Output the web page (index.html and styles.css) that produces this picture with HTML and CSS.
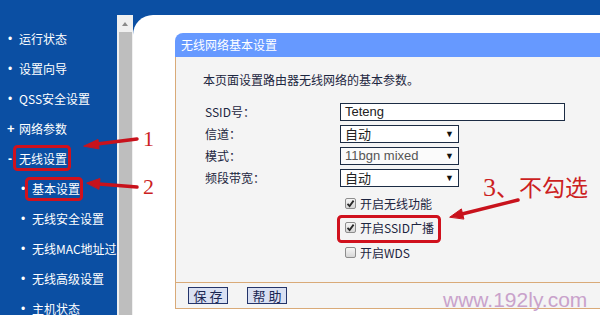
FILE: index.html
```html
<!DOCTYPE html>
<html lang="zh">
<head>
<meta charset="utf-8">
<title>无线网络基本设置</title>
<link rel="stylesheet" href="styles.css">
</head>
<body>
<div class="layout">
  <nav class="sidebar">
    <div class="nav-item"><span class="bullet">•</span>运行状态</div>
    <div class="nav-item"><span class="bullet">•</span>设置向导</div>
    <div class="nav-item"><span class="bullet">•</span>QSS安全设置</div>
    <div class="nav-item"><span class="bullet plus">+</span>网络参数</div>
    <div class="nav-item"><span class="bullet minus">-</span>无线设置</div>
    <div class="nav-item sub"><span class="bullet">•</span>基本设置</div>
    <div class="nav-item sub"><span class="bullet">•</span>无线安全设置</div>
    <div class="nav-item sub"><span class="bullet">•</span>无线MAC地址过滤</div>
    <div class="nav-item sub"><span class="bullet">•</span>无线高级设置</div>
    <div class="nav-item sub"><span class="bullet">•</span>主机状态</div>
  </nav>
  <div class="scrollbar">
    <div class="sb-up"><span class="sb-arrow"></span></div>
    <div class="sb-thumb"></div>
  </div>
  <main class="main">
    <section class="panel">
      <div class="panel-head">无线网络基本设置</div>
      <div class="panel-body">
        <p class="intro">本页面设置路由器无线网络的基本参数。</p>
        <div class="form">
          <div class="row"><span class="label">SSID号：</span><span class="field wide">Teteng</span></div>
          <div class="row"><span class="label">信道：</span><span class="field select"><span class="cjk">自动</span><span class="caret">▼</span></span></div>
          <div class="row"><span class="label">模式：</span><span class="field select muted">11bgn mixed<span class="caret">▼</span></span></div>
          <div class="row"><span class="label">频段带宽：</span><span class="field select"><span class="cjk">自动</span><span class="caret">▼</span></span></div>
        </div>
        <div class="checks">
          <div class="check-row"><span class="cb checked"><svg viewBox="0 0 9 9" width="9" height="9"><path d="M1.5 4.8 L3.6 7 L7.6 1.6" fill="none" stroke="#2a2a2a" stroke-width="1.8"/></svg></span>开启无线功能</div>
          <div class="check-row"><span class="cb checked"><svg viewBox="0 0 9 9" width="9" height="9"><path d="M1.5 4.8 L3.6 7 L7.6 1.6" fill="none" stroke="#2a2a2a" stroke-width="1.8"/></svg></span>开启SSID广播</div>
          <div class="check-row"><span class="cb"></span>开启WDS</div>
        </div>
        <div class="footer">
          <span class="btn">保存</span>
          <span class="btn">帮助</span>
        </div>
      </div>
    </section>
  </main>
</div>

<div class="watermark">www.192ly.com</div>
<div class="note n1">1</div>
<div class="note n2">2</div>
<div class="note n3"><span class="num">3</span>、不勾选</div>
<svg class="marks" width="600" height="315" viewBox="0 0 600 315">
  <g fill="none" stroke="#d0111d" stroke-width="3">
    <rect x="14.5" y="146.5" width="55" height="23" rx="3"/>
    <rect x="26.5" y="178.5" width="55" height="21" rx="3"/>
    <rect x="338.5" y="216.5" width="101" height="25" rx="3"/>
  </g>
  <g stroke="#c8121c" stroke-linecap="round" fill="#c8121c">
    <path d="M137 139 L97 144" stroke-width="3.5"/>
    <polygon points="84,146 98,139.5 99,148.5" stroke-width="1"/>
    <path d="M137 187 L99 184" stroke-width="3.5"/>
    <polygon points="87,183 100,178.5 99,189" stroke-width="1"/>
    <path d="M518 200 L462 214" stroke-width="3.5"/>
    <polygon points="450,217 461.4,208.9 463.8,218.7" stroke-width="1"/>
  </g>
</svg>
</body>
</html>
```
FILE: styles.css
```css
* { box-sizing: border-box; }
html, body { margin: 0; padding: 0; }
body {
  width: 600px;
  height: 315px;
  overflow: hidden;
  position: relative;
  background: #0b4fa3;
  font-family: "Noto Sans CJK SC", "Liberation Sans", sans-serif;
  font-size: 12px;
}
.layout {
  display: flex;
  padding-top: 15px;
  height: 315px;
}
.sidebar {
  width: 117px;
  flex: none;
  overflow: hidden;
  padding-top: 9px;
  color: #fff;
}
.nav-item {
  height: 30px;
  line-height: 30px;
  display: flex;
  align-items: center;
  white-space: nowrap;
  padding-left: 8px;
}
.nav-item.sub { padding-left: 21px; }
.bullet {
  width: 11px;
  flex: none;
  font-family: "Liberation Sans", sans-serif;
  font-size: 12px;
}
.bullet.plus { font-weight: bold; font-size: 13px; margin-left: -1px; width: 12px; }
.bullet.minus { font-weight: bold; }
.scrollbar {
  width: 16px;
  flex: none;
  background: #f0f0f0;
  display: flex;
  flex-direction: column;
}
.sb-up {
  height: 17px;
  display: flex;
  align-items: center;
  justify-content: center;
}
.sb-arrow {
  width: 0;
  height: 0;
  border-left: 3.5px solid transparent;
  border-right: 3.5px solid transparent;
  border-bottom: 4px solid #8a8a8a;
}
.sb-thumb {
  flex: 1;
  margin: 0 1px 0 2px;
  background: #bebebe;
}
.main {
  flex: 1;
  background: #fff;
  border-top-left-radius: 20px;
  padding: 18px 0 0 42px;
  overflow: hidden;
}
.panel { width: 520px; }
.panel-head {
  height: 24px;
  line-height: 24px;
  background: #6699ff;
  color: #fff;
  padding-left: 6px;
  border-top-left-radius: 8px;
}
.panel-body {
  background: #f4f4f4;
  border-left: 1px solid #d9aa78;
  color: #1c2640;
}
.intro {
  margin: 0;
  padding: 16px 0 0 27px;
  line-height: 14px;
  height: 46px;
}
.row {
  display: flex;
  height: 22px;
}
.label {
  width: 164px;
  padding-left: 29px;
  line-height: 18px;
}
.field {
  height: 18px;
  border: 1px solid #1c2c44;
  background: #fff;
  font-family: "Liberation Sans", sans-serif;
  font-size: 13px;
  line-height: 16px;
  padding-left: 4px;
  color: #222;
  display: flex;
  align-items: center;
}
.field.wide { width: 225px; }
.field.select { width: 119px; position: relative; }
.field.muted { color: #555; background: #fbfbfb; }
.cjk { font-family: "Noto Sans CJK SC", sans-serif; font-size: 13px; }
.caret {
  margin-left: auto;
  margin-right: 4px;
  font-size: 9px;
  color: #111;
}
.checks { padding-bottom: 17px; }
.check-row {
  height: 24.5px;
  display: flex;
  align-items: center;
  padding-left: 169px;
  color: #1c2440;
}
.cb {
  width: 11px;
  height: 11px;
  border: 1px solid #8d8d8d;
  border-radius: 2px;
  background: linear-gradient(#f6f6f6, #d6d6d6);
  margin-right: 4px;
  display: flex;
  align-items: center;
  justify-content: center;
}
.cb svg { display: block; }
.footer {
  height: 27px;
  border-top: 1px solid #d9aa78;
  border-bottom: 1px solid #d9aa78;
  display: flex;
  align-items: flex-start;
  gap: 19px;
  padding: 4px 0 0 12px;
}
.btn {
  width: 40px;
  height: 17px;
  border: 1px solid #23346a;
  background: #d9e0f2;
  color: #1a2652;
  font-size: 13px;
  line-height: 15px;
  text-align: center;
  letter-spacing: 3px;
  padding-left: 3px;
}
.watermark {
  position: absolute;
  left: 443px;
  top: 289px;
  font-family: "Liberation Sans", sans-serif;
  font-size: 21px;
  line-height: 21px;
  color: #c9a2cb;
}
.note {
  position: absolute;
  color: #cc1f1f;
  font-family: "Liberation Serif", "Noto Sans CJK SC", serif;
  white-space: nowrap;
}
.n1, .n2 { left: 143px; font-size: 22px; line-height: 22px; }
.n1 { top: 128px; }
.n2 { top: 176px; }
.n3 { left: 483px; top: 176px; font-size: 23px; line-height: 24px; }
.n3 .num { font-size: 26px; }
.marks {
  position: absolute;
  left: 0;
  top: 0;
  pointer-events: none;
}
```
